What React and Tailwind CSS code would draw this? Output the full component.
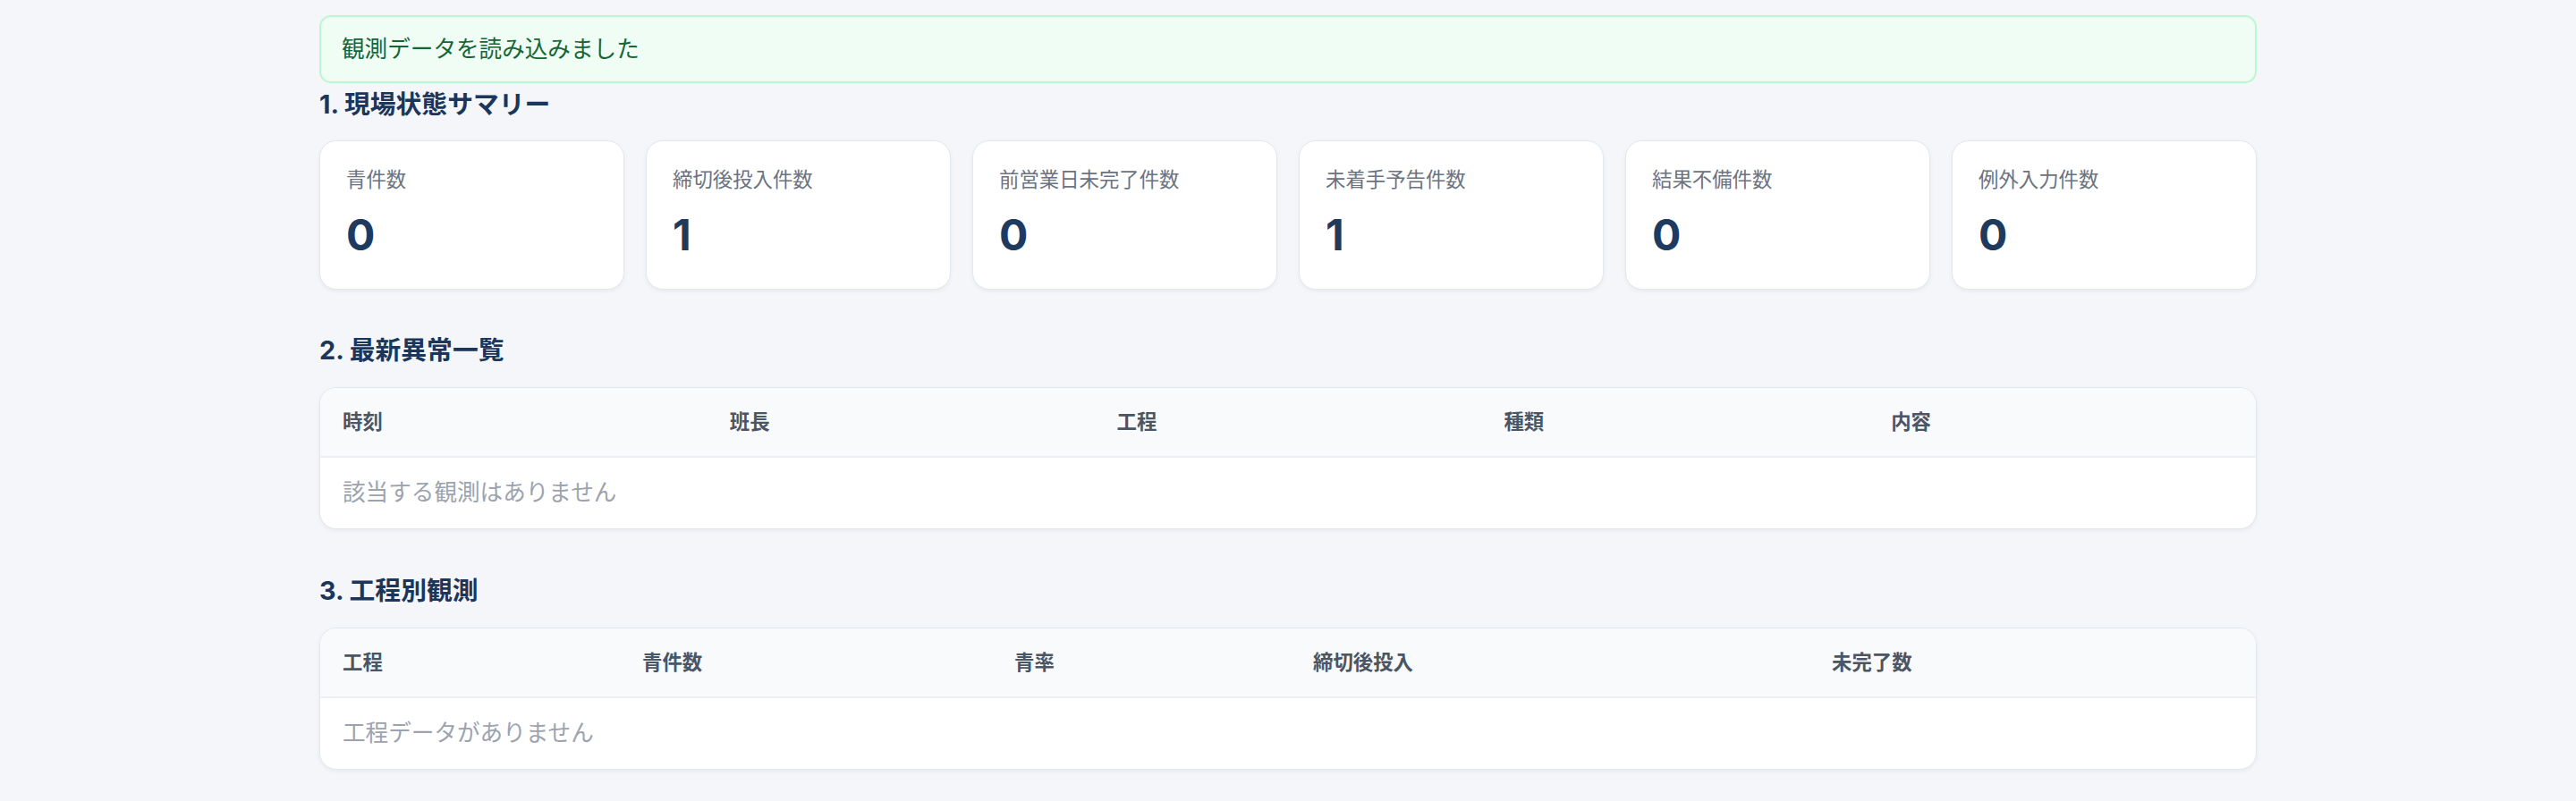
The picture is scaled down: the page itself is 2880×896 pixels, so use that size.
import React from "react";

const summary = [
  { label: "青件数", value: 0 },
  { label: "締切後投入件数", value: 1 },
  { label: "前営業日未完了件数", value: 0 },
  { label: "未着手予告件数", value: 1 },
  { label: "結果不備件数", value: 0 },
  { label: "例外入力件数", value: 0 },
];

const SectionTitle = ({ children, className }) => (
  <h2
    className={`text-[28.8px] leading-[38px] font-bold text-[#1b365a] ${className}`}
  >
    {children}
  </h2>
);

const EmptyTable = ({ columns, widths, message }) => (
  <div className="mt-[22px] overflow-hidden rounded-[19px] border border-[#e2e8f0] bg-white shadow-[0_2px_5px_rgba(15,23,42,0.05)]">
    <table className="w-full table-fixed border-collapse">
      <colgroup>
        {widths.map((w, i) => (
          <col key={i} style={{ width: w }} />
        ))}
      </colgroup>
      <thead>
        <tr className="h-[77px] border-b-2 border-[#eceff3] bg-[#f9fafc]">
          {columns.map((c) => (
            <th
              key={c}
              className="px-[25px] text-left text-[22.4px] font-bold text-[#4b5563]"
            >
              {c}
            </th>
          ))}
        </tr>
      </thead>
      <tbody>
        <tr className="h-[80px]">
          <td
            colSpan={columns.length}
            className="px-[25px] text-[25.6px] text-[#9ca3af]"
          >
            {message}
          </td>
        </tr>
      </tbody>
    </table>
  </div>
);

export default function App() {
  return (
    <div className="min-h-[896px] bg-[#f4f6fa] font-['Inter','Noto_Sans_CJK_JP',sans-serif]">
      <div className="mx-auto w-[2166px] pt-[17px] pb-[38px]">
        {/* status banner */}
        <div className="flex h-[76px] items-center rounded-[13px] border-2 border-[#bbf7d0] bg-[#effdf4] px-[23px] text-[25.6px] text-[#166534]">
          観測データを読み込みました
        </div>

        <SectionTitle className="mt-[5px]">1. 現場状態サマリー</SectionTitle>
        <div className="mt-[21px] grid grid-cols-6 gap-[24px]">
          {summary.map((s) => (
            <div
              key={s.label}
              className="h-[167px] rounded-[19px] border border-[#e2e8f0] bg-white px-[29px] pt-[26px] shadow-[0_2px_5px_rgba(15,23,42,0.05)]"
            >
              <div className="text-[22.4px] leading-[34px] text-[#6b7280]">
                {s.label}
              </div>
              <div className="mt-[16px] text-[48px] leading-[58px] font-bold text-[#1e3a5f]">
                {s.value}
              </div>
            </div>
          ))}
        </div>

        <SectionTitle className="mt-[49px]">2. 最新異常一覧</SectionTitle>
        <EmptyTable
          columns={["時刻", "班長", "工程", "種類", "内容"]}
          widths={["20%", "20%", "20%", "20%", "20%"]}
          message="該当する観測はありません"
        />

        <SectionTitle className="mt-[50px]">3. 工程別観測</SectionTitle>
        <EmptyTable
          columns={["工程", "青件数", "青率", "締切後投入", "未完了数"]}
          widths={["335px", "416px", "334px", "580px", "501px"]}
          message="工程データがありません"
        />
      </div>
    </div>
  );
}
